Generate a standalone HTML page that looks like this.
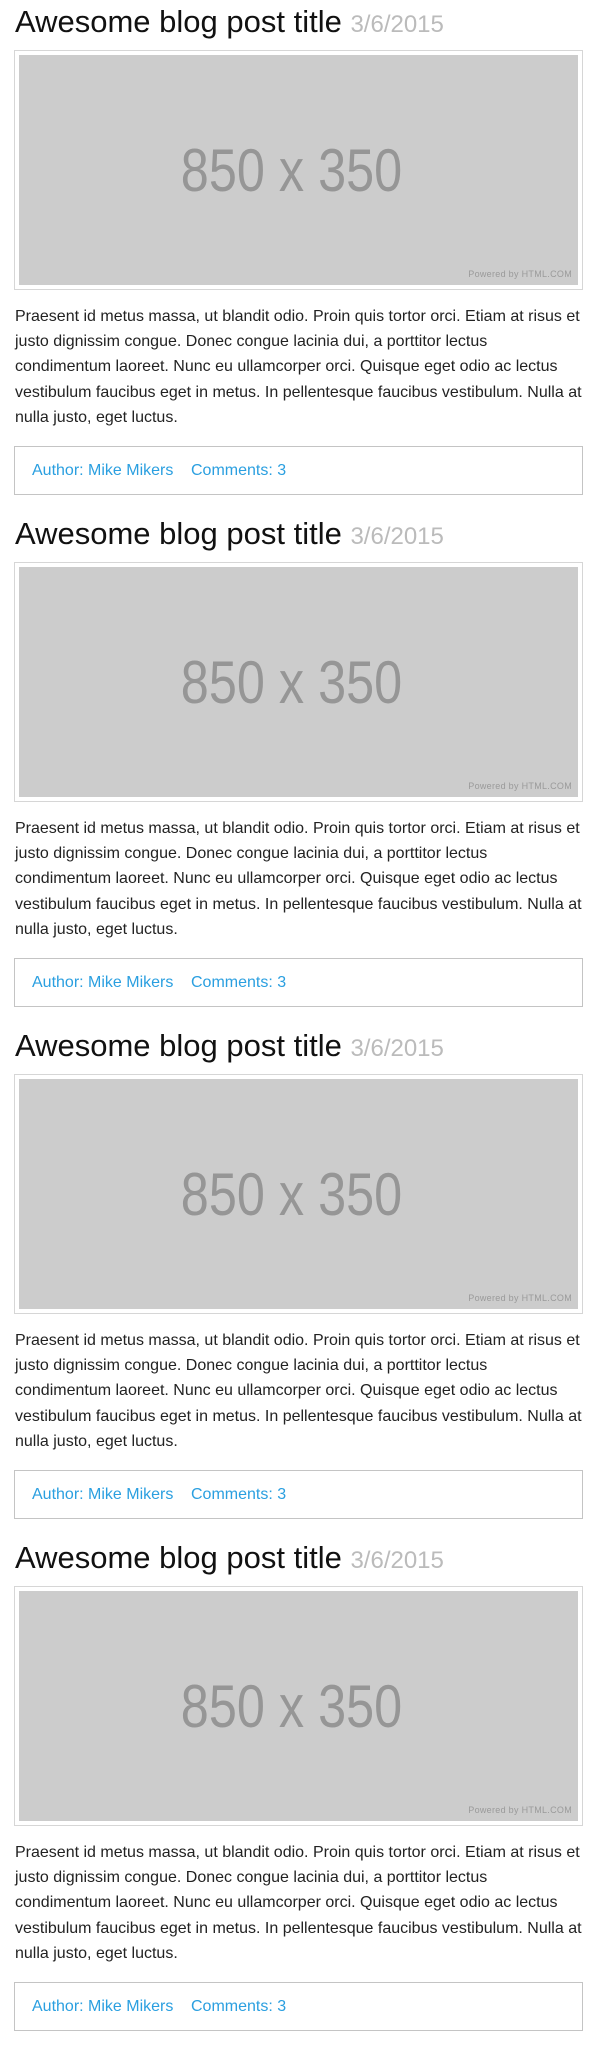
<!DOCTYPE html>
<html><head><meta charset="utf-8"><style>
body{margin:0;background:#fff;font-family:"Liberation Sans",Arial,sans-serif;width:597px;height:2049px;overflow:hidden;position:relative}
.post{position:absolute;left:0;width:597px;height:512px}
.t{position:absolute;left:15px;top:2px;font-size:31px;line-height:40px;color:#111;white-space:nowrap}
.t span{font-size:24px;color:#bbb}
.fr{position:absolute;left:14px;top:50px;width:559px;height:230px;border:1px solid #d6d6d6;padding:4px;background:#fff}
.im{position:relative;width:559px;height:230px;background:#ccc}
.big{position:absolute;left:-14px;right:0;text-align:center;font-size:60px;line-height:60px;color:#969696;transform:scaleX(.84);top:86px}
.pw{position:absolute;right:6px;top:214px;font-size:9px;color:#9a9a9a;letter-spacing:.3px}
.p{position:absolute;left:15px;top:304px;width:567px;font-size:16px;line-height:25.2px;color:#222;margin:0}
.ft{position:absolute;left:14px;top:446px;width:567px;height:47px;border:1px solid #c4c4c4}
.ft a{position:absolute;top:14px;font-size:16px;line-height:20px;color:#2a9fe0;text-decoration:none}
</style></head><body>
<div class="post" style="top:0">
<div class="t">Awesome blog post title <span>3/6/2015</span></div>
<div class="fr"><div class="im"><div class="big">850 x 350</div><div class="pw">Powered by HTML.COM</div></div></div>
<p class="p">Praesent id metus massa, ut blandit odio. Proin quis tortor orci. Etiam at risus et justo dignissim congue. Donec congue lacinia dui, a porttitor lectus condimentum laoreet. Nunc eu ullamcorper orci. Quisque eget odio ac lectus vestibulum faucibus eget in metus. In pellentesque faucibus vestibulum. Nulla at nulla justo, eget luctus.</p>
<div class="ft"><a style="left:17px">Author: Mike Mikers</a><a style="left:176px">Comments: 3</a></div>
</div>
<div class="post" style="top:512px">
<div class="t">Awesome blog post title <span>3/6/2015</span></div>
<div class="fr"><div class="im"><div class="big">850 x 350</div><div class="pw">Powered by HTML.COM</div></div></div>
<p class="p">Praesent id metus massa, ut blandit odio. Proin quis tortor orci. Etiam at risus et justo dignissim congue. Donec congue lacinia dui, a porttitor lectus condimentum laoreet. Nunc eu ullamcorper orci. Quisque eget odio ac lectus vestibulum faucibus eget in metus. In pellentesque faucibus vestibulum. Nulla at nulla justo, eget luctus.</p>
<div class="ft"><a style="left:17px">Author: Mike Mikers</a><a style="left:176px">Comments: 3</a></div>
</div>
<div class="post" style="top:1024px">
<div class="t">Awesome blog post title <span>3/6/2015</span></div>
<div class="fr"><div class="im"><div class="big">850 x 350</div><div class="pw">Powered by HTML.COM</div></div></div>
<p class="p">Praesent id metus massa, ut blandit odio. Proin quis tortor orci. Etiam at risus et justo dignissim congue. Donec congue lacinia dui, a porttitor lectus condimentum laoreet. Nunc eu ullamcorper orci. Quisque eget odio ac lectus vestibulum faucibus eget in metus. In pellentesque faucibus vestibulum. Nulla at nulla justo, eget luctus.</p>
<div class="ft"><a style="left:17px">Author: Mike Mikers</a><a style="left:176px">Comments: 3</a></div>
</div>
<div class="post" style="top:1536px">
<div class="t">Awesome blog post title <span>3/6/2015</span></div>
<div class="fr"><div class="im"><div class="big">850 x 350</div><div class="pw">Powered by HTML.COM</div></div></div>
<p class="p">Praesent id metus massa, ut blandit odio. Proin quis tortor orci. Etiam at risus et justo dignissim congue. Donec congue lacinia dui, a porttitor lectus condimentum laoreet. Nunc eu ullamcorper orci. Quisque eget odio ac lectus vestibulum faucibus eget in metus. In pellentesque faucibus vestibulum. Nulla at nulla justo, eget luctus.</p>
<div class="ft"><a style="left:17px">Author: Mike Mikers</a><a style="left:176px">Comments: 3</a></div>
</div>
</body></html>
